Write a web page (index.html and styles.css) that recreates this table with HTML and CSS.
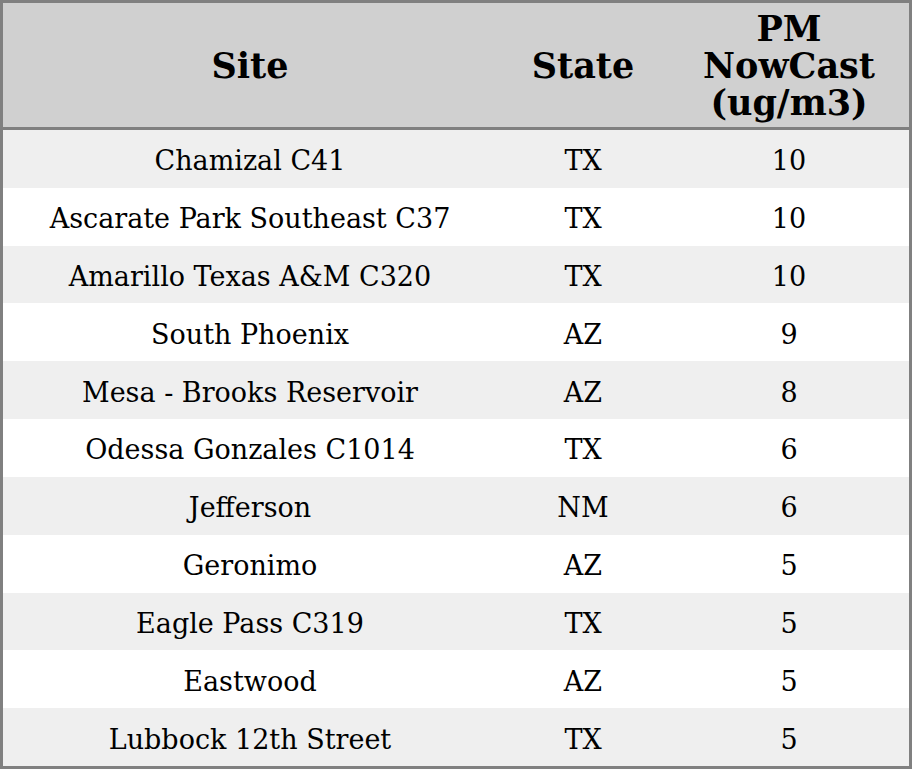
FILE: index.html
```html
<!DOCTYPE html>
<html>
<head>
<meta charset="utf-8">
<link rel="stylesheet" href="styles.css">
</head>
<body>
<table class="aq">
  <colgroup>
    <col class="c-site">
    <col class="c-state">
    <col class="c-pm">
  </colgroup>
  <thead>
    <tr><th>Site</th><th>State</th><th>PM<br>NowCast<br>(ug/m3)</th></tr>
  </thead>
  <tbody>
    <tr><td>Chamizal C41</td><td>TX</td><td>10</td></tr>
    <tr><td>Ascarate Park Southeast C37</td><td>TX</td><td>10</td></tr>
    <tr><td>Amarillo Texas A&amp;M C320</td><td>TX</td><td>10</td></tr>
    <tr><td>South Phoenix</td><td>AZ</td><td>9</td></tr>
    <tr><td>Mesa - Brooks Reservoir</td><td>AZ</td><td>8</td></tr>
    <tr><td>Odessa Gonzales C1014</td><td>TX</td><td>6</td></tr>
    <tr><td>Jefferson</td><td>NM</td><td>6</td></tr>
    <tr><td>Geronimo</td><td>AZ</td><td>5</td></tr>
    <tr><td>Eagle Pass C319</td><td>TX</td><td>5</td></tr>
    <tr><td>Eastwood</td><td>AZ</td><td>5</td></tr>
    <tr><td>Lubbock 12th Street</td><td>TX</td><td>5</td></tr>
  </tbody>
</table>
</body>
</html>
```
FILE: styles.css
```css
html, body {
  margin: 0;
  padding: 0;
  background: #ffffff;
}
.aq {
  width: 912px;
  border: 3px solid #808080;
  border-collapse: separate;
  border-spacing: 0;
  table-layout: fixed;
  font-family: "DejaVu Serif", serif;
  color: #000;
}
.c-site { width: 494px; }
.c-state { width: 172px; }
.c-pm { width: 240px; }
.aq th {
  background: #d0d0d0;
  font-size: 35px;
  font-weight: bold;
  line-height: 37px;
  height: 127px;
  padding: 1px 0 0;
  box-sizing: border-box;
  text-align: center;
  vertical-align: middle;
  border-bottom: 3px solid #808080;
}
.aq td {
  font-size: 27px;
  line-height: 30px;
  height: 57.82px;
  padding: 5px 0 0;
  box-sizing: border-box;
  text-align: center;
  vertical-align: middle;
}
.aq tbody tr:nth-child(odd) td {
  background: #efefef;
}
```
